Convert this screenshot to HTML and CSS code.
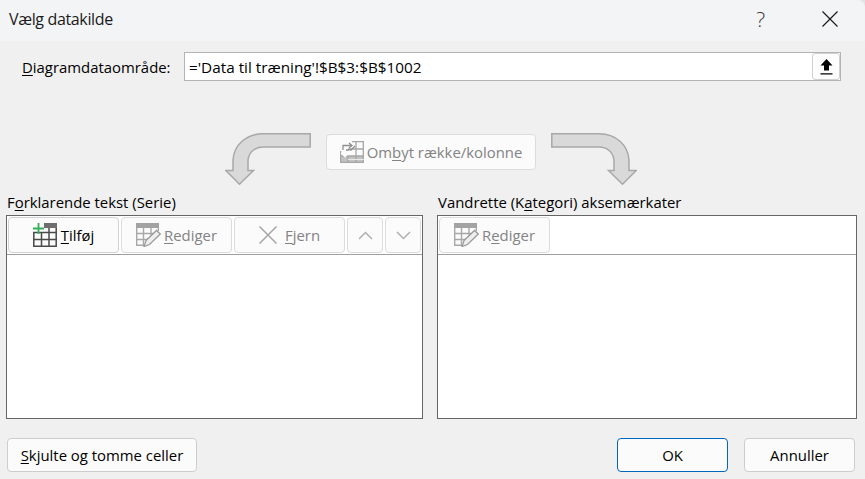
FILE: index.html
```html
<!DOCTYPE html>
<html lang="da">
<head>
<meta charset="utf-8">
<title>Vælg datakilde</title>
<link rel="stylesheet" href="styles.css">
</head>
<body>
<svg class="defs" width="0" height="0" aria-hidden="true">
  <defs>
    <symbol id="arrow" viewBox="0 0 86 52">
      <path d="M85.2 .8V14H38C30 14 24 19 23 27V37.500H28.500L14.500 51.200L.8 37.500H8V27C9 12 21 .8 38 .8Z" fill="#d9d9d9" stroke="#a8a8a8" stroke-width="1.500"/>
    </symbol>
    <symbol id="edit" viewBox="0 0 25 24">
      <path d="M0 0H23V5H0Z" fill="#a3a3a3"/>
      <path d="M.7 5V22.300H8M22.300 5V8M7.500 5V22M15 5V12M.7 10.500H17M.7 16.500H12" fill="none" stroke="#a8a8a8" stroke-width="1.400"/>
      <path d="M10 17.500L20.500 7.500L24.300 11L13.500 21.500L8 23.500Z" fill="#eeeeee" stroke="#9a9a9a" stroke-width="1.300"/>
    </symbol>
  </defs>
</svg>
<main class="dialog">
  <header class="titlebar">
    <h1 class="title">Vælg datakilde</h1>
    <span class="help">?</span>
    <svg class="close" width="16" height="16" viewBox="0 0 16 16"><path d="M.5 .5L15.500 15.500M15.500 .5L.5 15.500" stroke="#1a1a1a" stroke-width="1.200" fill="none"/></svg>
  </header>

  <section class="range">
    <label class="range-label"><u>D</u>iagramdataområde:</label>
    <div class="range-input">
      <span class="range-value">='Data til træning'!$B$3:$B$1002</span>
      <button class="pick">
        <svg width="13" height="16" viewBox="0 0 13 16"><path d="M6.500 0L12.500 6.500H9V11.500H4V6.500H.5Z" fill="#000"/><path d="M.5 14.800H12.500" stroke="#000" stroke-width="1.300"/></svg>
      </button>
    </div>
  </section>

  <section class="swap">
    <svg class="arrow" width="86" height="52"><use href="#arrow"/></svg>
    <button class="btn disabled swap-btn">
      <svg class="ico-swap" width="24" height="22" viewBox="0 0 24 22">
        <path d="M0 15H24V22H0Z" fill="#c2c2c2"/>
        <path d="M12 .7H23.300V21.300H.7V10M16 1V22M8 15V22M8 8H24M.7 15H24" fill="none" stroke="#a6a6a6" stroke-width="1.300"/>
        <path d="M8 18.500H24" stroke="#e8e8e8" stroke-width="1"/>
        <path d="M3 9V4.500H11M9 2L12 4.500L9 7M15 5L11 9H6" fill="none" stroke="#8f8f8f" stroke-width="1.300"/>
        <path d="M1.500 11.500L5 15L10.500 10" fill="none" stroke="#ffffff" stroke-width="2"/>
      </svg>
      <span>Om<u>b</u>yt række/kolonne</span>
    </button>
    <svg class="arrow flip" width="86" height="52"><use href="#arrow"/></svg>
  </section>

  <section class="lists">
    <div class="list">
      <h2 class="list-label">F<u>o</u>rklarende tekst (Serie)</h2>
      <div class="panel">
        <div class="toolbar">
          <button class="btn tool wide">
            <svg class="ico" width="24" height="24" viewBox="0 0 24 24">
              <path d="M11 0H24V5H11Z" fill="#6e6e6e"/>
              <path d="M.8 9V23.200H23.200V5M8.500 9V23M16 5V23M0 9.500H24M0 16.500H24" fill="none" stroke="#4a4a4a" stroke-width="1.500"/>
              <path d="M0 5.500H11M5.500 0V11" stroke="#35b05a" stroke-width="1.800" fill="none"/>
            </svg>
            <span><u>T</u>ilføj</span>
          </button>
          <button class="btn tool wide disabled edit-btn">
            <svg class="ico" width="25" height="24"><use href="#edit"/></svg>
            <span><u>R</u>ediger</span>
          </button>
          <button class="btn tool wide disabled remove">
            <svg class="ico" width="18" height="18" viewBox="0 0 18 18"><path d="M.5 .5L17.500 17.500M17.500 .5L.5 17.500" stroke="#a6a6a6" stroke-width="1.500" fill="none"/></svg>
            <span><u>F</u>jern</span>
          </button>
          <button class="btn tool square disabled">
            <svg width="15" height="9" viewBox="0 0 15 9"><path d="M1 8L7.500 1.500L14 8" stroke="#b0b0b0" stroke-width="1.500" fill="none"/></svg>
          </button>
          <button class="btn tool square disabled">
            <svg width="15" height="9" viewBox="0 0 15 9"><path d="M1 1L7.500 7.500L14 1" stroke="#b0b0b0" stroke-width="1.500" fill="none"/></svg>
          </button>
        </div>
      </div>
    </div>
    <div class="list">
      <h2 class="list-label">Vandrette (K<u>a</u>tegori) aksemærkater</h2>
      <div class="panel">
        <div class="toolbar">
          <button class="btn tool wide disabled edit-btn">
            <svg class="ico" width="25" height="24"><use href="#edit"/></svg>
            <span>R<u>e</u>diger</span>
          </button>
        </div>
      </div>
    </div>
  </section>

  <footer class="footer">
    <button class="btn action hidden-cells"><span><u>S</u>kjulte og tomme celler</span></button>
    <div class="footer-right">
      <button class="btn action default">OK</button>
      <button class="btn action">Annuller</button>
    </div>
  </footer>
</main>
</body>
</html>
```

FILE: styles.css
```css
* { box-sizing: border-box; }
html, body { margin: 0; padding: 0; }
body { width: 865px; height: 479px; overflow: hidden; background: #e4e4e6; }
.defs { position: absolute; }
.dialog {
  width: 865px; height: 479px;
  font-family: "Open Sans", "Noto Sans", sans-serif;
  font-size: 14.900px; color: #000;
  display: flex; flex-direction: column;
  background: #f0f0f0;
  border-top-right-radius: 8px;
  overflow: hidden;
}
u { text-underline-offset: 2px; text-decoration-thickness: 1px; }
button { font: inherit; color: inherit; padding: 0; margin: 0; }

.titlebar { height: 41px; background: #f3f4f6; display: flex; align-items: center; padding: 0 27px 3px 9px; flex: none; }
.title { flex: 1; margin: 0; font-size: 16px; letter-spacing: -0.350px; font-weight: 400; color: #1a1a1a; }
.help { font-size: 21px; font-weight: 300; line-height: 24px; color: #333; margin-right: 57px; }

.range { display: flex; align-items: center; height: 29px; margin-top: 11px; padding-left: 22px; flex: none; }
.range-label { width: 162px; }
.range-input {
  width: 657px; height: 29px; background: #fff; border: 1px solid #b4b4b8;
  display: flex; align-items: center; justify-content: space-between; padding-left: 4px;
}
.range-value { color: #000; font-size: 15.300px; }
.pick {
  width: 28px; height: 27px; background: #fdfdfd; border: 1px solid #d0d0d0; border-radius: 3px;
  display: flex; align-items: center; justify-content: center;
}

.swap { display: flex; align-items: flex-start; gap: 15px; height: 52px; margin-top: 52px; padding-left: 225px; flex: none; }
.flip { transform: scaleX(-1); }
.btn {
  background: #fbfbfb; border: 1px solid #d2d2d2; border-radius: 4px;
  display: flex; align-items: center; justify-content: center;
}
.btn.disabled { color: #838383; border-color: #dcdcdc; }
.swap-btn { width: 210px; height: 36px; margin-top: 1px; gap: 3px; border-color: #cfcfcf; }

.lists { display: flex; gap: 14px; padding-left: 6px; flex: none; }
.list { width: 417px; }
.list + .list { width: 420px; }
.list-label { margin: 8px 0 3px; height: 19px; line-height: 19px; font-size: 14.900px; font-weight: 400; padding-left: 1px; }
.panel { height: 204px; background: #fff; border: 1px solid #666; }
.toolbar { height: 39px; border-bottom: 1px solid #a0a0a0; display: flex; gap: 2px; padding: 1px; background: #fff; }
.tool { height: 36px; gap: 4px; }
.edit-btn { gap: 3px; }
.remove { gap: 8px; }
.wide { width: 111px; }
.square { width: 36px; }

.footer { display: flex; justify-content: space-between; padding: 19px 10px 0 7px; flex: none; }
.footer-right { display: flex; gap: 16px; }
.action { height: 34px; width: 111px; border-color: #cdcdcd; }
.hidden-cells { width: 190px; }
.default { border-color: #0067c0; }
```
